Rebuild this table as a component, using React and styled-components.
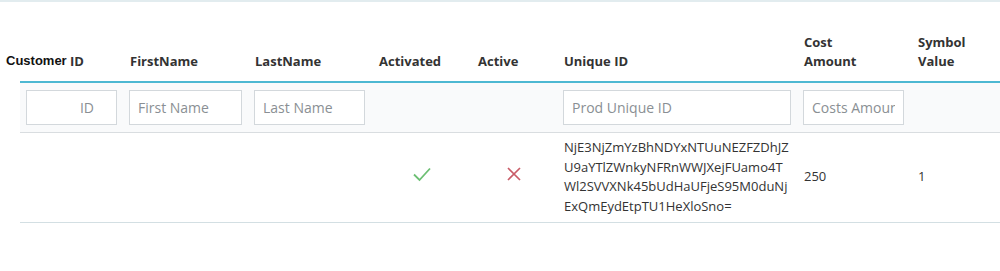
import React from "react";
import styled, { createGlobalStyle } from "styled-components";

const GlobalStyle = createGlobalStyle`
  body {
    margin: 0;
    background: #ffffff;
    font-family: "Open Sans", "Liberation Sans", sans-serif;
  }
`;

const Page = styled.div`
  border-top: 2px solid #e2ecef;
  padding-top: 18px;
  position: relative;
`;

const CustomerLabel = styled.span`
  position: absolute;
  left: 6px;
  top: 51px;
  font-family: "Liberation Sans", Arial, sans-serif;
  font-weight: 700;
  font-size: 13px;
  color: #111;
`;

const Table = styled.table`
  margin-left: 20px;
  width: calc(100% - 20px);
  border-collapse: collapse;
  table-layout: fixed;
`;

const HeadCell = styled.th`
  text-align: left;
  vertical-align: bottom;
  font-size: 13px;
  font-weight: 700;
  line-height: 19px;
  color: #333;
  padding: 0 7px 10px ${(p) => p.$indent || "7px"};
  height: 51px;
  border-bottom: 2px solid #4db8d2;
`;

const FilterRow = styled.tr`
  background: #f9fafb;
  border-bottom: 1px solid #d9dde0;
`;

const FilterCell = styled.td`
  padding: 7px 6px;
`;

const FilterInput = styled.input`
  box-sizing: border-box;
  width: ${(p) => p.$w}px;
  height: 35px;
  border: 1px solid #d3d8dc;
  background: #fff;
  font-family: "Open Sans", "Liberation Sans", sans-serif;
  font-size: 14px;
  color: #555;
  padding: 0 8px;
  text-align: ${(p) => p.$align || "left"};
  padding-right: ${(p) => (p.$align === "right" ? "22px" : "8px")};
  &::placeholder {
    color: #8a8f94;
  }
`;

const DataRow = styled.tr`
  border-bottom: 1px solid #d3dfe3;
`;

const DataCell = styled.td`
  padding: 5px 7px 6px;
  font-size: 13px;
  line-height: 19.6px;
  color: #333;
  vertical-align: middle;
  text-align: ${(p) => p.$align || "left"};
`;

const Check = () => (
  <svg width="20" height="16" viewBox="0 0 20 16">
    <path d="M2 8.5 L7.5 14 L18 2.5" fill="none" stroke="#6cbf73" strokeWidth="1.8" />
  </svg>
);

const Cross = () => (
  <svg width="16" height="16" viewBox="0 0 16 16">
    <path d="M2 2 L14 14 M14 2 L2 14" fill="none" stroke="#c95c68" strokeWidth="1.7" />
  </svg>
);

const App = () => {
  return (
    <Page>
      <GlobalStyle />
      <CustomerLabel>Customer</CustomerLabel>
      <Table>
        <colgroup>
          <col style={{ width: 103 }} />
          <col style={{ width: 125 }} />
          <col style={{ width: 124 }} />
          <col style={{ width: 99 }} />
          <col style={{ width: 86 }} />
          <col style={{ width: 240 }} />
          <col style={{ width: 114 }} />
          <col />
        </colgroup>
        <thead>
          <tr>
            <HeadCell $indent="50px">ID</HeadCell>
            <HeadCell>FirstName</HeadCell>
            <HeadCell>LastName</HeadCell>
            <HeadCell>Activated</HeadCell>
            <HeadCell>Active</HeadCell>
            <HeadCell>Unique ID</HeadCell>
            <HeadCell>
              Cost
              <br />
              Amount
            </HeadCell>
            <HeadCell>
              Symbol
              <br />
              Value
            </HeadCell>
          </tr>
        </thead>
        <tbody>
          <FilterRow>
            <FilterCell>
              <FilterInput $w={91} $align="right" placeholder="ID" />
            </FilterCell>
            <FilterCell>
              <FilterInput $w={113} placeholder="First Name" />
            </FilterCell>
            <FilterCell>
              <FilterInput $w={111} placeholder="Last Name" />
            </FilterCell>
            <FilterCell />
            <FilterCell />
            <FilterCell>
              <FilterInput $w={228} placeholder="Prod Unique ID" />
            </FilterCell>
            <FilterCell>
              <FilterInput $w={101} placeholder="Costs Amount" />
            </FilterCell>
            <FilterCell />
          </FilterRow>
          <DataRow>
            <DataCell />
            <DataCell />
            <DataCell />
            <DataCell $align="center">
              <Check />
            </DataCell>
            <DataCell $align="center">
              <Cross />
            </DataCell>
            <DataCell>
              NjE3NjZmYzBhNDYxNTUuNEZFZDhJZ
              <br />
              U9aYTlZWnkyNFRnWWJXejFUamo4T
              <br />
              Wl2SVVXNk45bUdHaUFjeS95M0duNj
              <br />
              ExQmEydEtpTU1HeXloSno=
            </DataCell>
            <DataCell>250</DataCell>
            <DataCell>1</DataCell>
          </DataRow>
        </tbody>
      </Table>
    </Page>
  );
};

export default App;
